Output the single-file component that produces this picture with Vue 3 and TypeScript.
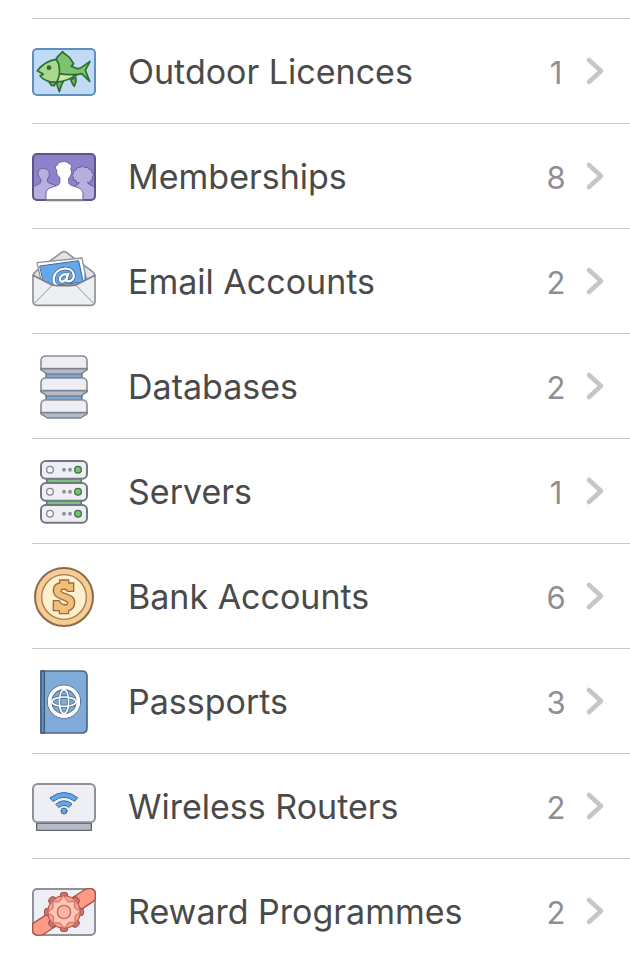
<script setup lang="ts">
type IconName = 'fish' | 'people' | 'mail' | 'database' | 'server' | 'coin' | 'passport' | 'router' | 'reward'

interface Category {
  name: string
  count: number
  icon: IconName
  top: number
}

// `top` is the vertical origin of each icon's 192-unit drawing area
const categories: Category[] = [
  { name: 'Outdoor Licences', count: 1, icon: 'fish', top: 12 },
  { name: 'Memberships', count: 8, icon: 'people', top: 9 },
  { name: 'Email Accounts', count: 2, icon: 'mail', top: 18 },
  { name: 'Databases', count: 2, icon: 'database', top: 15 },
  { name: 'Servers', count: 1, icon: 'server', top: 15 },
  { name: 'Bank Accounts', count: 6, icon: 'coin', top: 15 },
  { name: 'Passports', count: 3, icon: 'passport', top: 15 },
  { name: 'Wireless Routers', count: 2, icon: 'router', top: 0 },
  { name: 'Reward Programmes', count: 2, icon: 'reward', top: 0 },
]

const layers = [15, 81, 147]
const units = [15, 81, 147]
const petals = [0, 45, 90, 135, 180, 225, 270, 315]
</script>

<template>
  <main class="screen">
    <ul class="list">
      <li v-for="item in categories" :key="item.name" class="item">
        <a class="row" href="#">
          <svg class="icon" :viewBox="`24 ${item.top} 192 192`" aria-hidden="true" stroke-linejoin="round" stroke-linecap="round">
            <g v-if="item.icon === 'fish'">
              <rect x="27" y="39" width="186" height="138" rx="12" fill="#c2dbf4" stroke="#5f8fc0" stroke-width="6" />
              <g stroke="#2e6b35" stroke-width="5">
                <path d="M74 136L82 148L91 149L96 138Z" fill="#6fba63" />
                <path d="M96 136L101 152L106 167L112 148L118 136Z" fill="#6fba63" />
                <path d="M140 131L146 144L151 151L156 136L155 125Z" fill="#6fba63" />
                <path d="M94 74C98 62 108 55 116 47C122 56 134 59 139 68L149 83L142 91C151 92 154 99 164 98C174 95 184 85 198 76L184 103L197 136L173 113C162 113 154 120 142 125L104 114Z" fill="#7cc36d" />
                <path d="M104 113C122 116 142 116 158 115C140 130 122 136 98 138Z" fill="#cbeaa0" />
                <path d="M40 104C54 86 74 73 97 70C109 88 110 118 98 138C78 141 56 132 48 119L58 115Z" fill="#a9d98a" />
              </g>
              <circle cx="75" cy="95" r="7" fill="#2e6b35" />
            </g>

            <g v-else-if="item.icon === 'people'">
              <rect x="27" y="36" width="186" height="138" rx="12" fill="#8e82cc" />
              <path d="M28 134C36 128 47 128 51 121L50 111C39 101 39 81 55 79C74 77 82 97 71 111L70 119C75 126 88 126 96 130L84 174H39Q28 174 28 162Z" fill="#b6b0df" stroke="#6a6099" stroke-width="3" />
              <path d="M211 134C202 129 194 130 190 120L198 123L200 115L208 112L204 105L210 98L204 93L203 84L195 82L190 75L183 77L175 72L168 77L160 76L157 84L148 86L149 94L144 100L149 106L147 114L156 115L158 123L166 122C162 130 155 131 146 134L158 174H201Q212 174 212 162Z" fill="#b6b0df" stroke="#6a6099" stroke-width="3" />
              <path d="M66 175V153C67 137 85 137 104 128C109 124 108 112 107 106C98 99 96 92 99 85C92 80 94 70 101 68C104 58 112 62 117 58C124 59 130 59 134 65C144 67 144 75 140 80C145 92 142 101 135 107C133 118 132 126 142 130C160 137 175 138 177 154V175Z" fill="#fff" stroke="#6a6099" stroke-width="3" />
              <rect x="27" y="36" width="186" height="138" rx="12" fill="none" stroke="#5d5587" stroke-width="6" />
              <path d="M66 174H177" stroke="#85828e" stroke-width="6" stroke-linecap="butt" />
            </g>

            <g v-else-if="item.icon === 'mail'">
              <path d="M28 94Q28 87 37 81L112 26Q120 20 128 26L203 81Q212 87 212 94L190 124H50Z" fill="#e2e4e9" stroke="#94969b" stroke-width="5" />
              <path d="M39 56L174 42L189 117L56 132Z" fill="#fff" stroke="#929499" stroke-width="4" />
              <path d="M48 66L164 50L178 114L62 128Z" fill="#64a8ec" stroke="#45678f" stroke-width="3" />
              <path d="M182 84L188 106L181 113Z" fill="#4385cc" />
              <path d="M107 128C77 122 86 77 121 74C155 70 158 112 133 112C125 112 127 104 133 89M130 95C125 85 107 94 108 107C110 118 124 112 129 100" fill="none" stroke="#3e6287" stroke-width="11" />
              <path d="M107 128C77 122 86 77 121 74C155 70 158 112 133 112C125 112 127 104 133 89M130 95C125 85 107 94 108 107C110 118 124 112 129 100" fill="none" stroke="#fff" stroke-width="7" />
              <path d="M27 94L84 123Q93 125 105 125H135Q147 125 156 123L213 94V172Q213 184 201 184H39Q27 184 27 172Z" fill="#eeeff3" stroke="#8f9196" stroke-width="5" />
              <path d="M30 179L84 124M210 179L156 124" stroke="#8f9196" stroke-width="3" />
              <path d="M27 94L84 123Q93 125 105 125H135Q147 125 156 123L213 94" fill="none" stroke="#727986" stroke-width="3" />
            </g>

            <g v-else-if="item.icon === 'database'">
              <path d="M66 66H174V84H66ZM66 132H174V150H66Z" fill="#79a7d8" stroke="#516e92" stroke-width="4" />
              <g v-for="y in layers" :key="y">
                <path :d="`M50 ${y + 40}V${y + 44}L70 ${y + 57}H170L190 ${y + 44}V${y + 40}Z`" fill="#b4bbc9" stroke="#7b808b" stroke-width="4" />
                <path :d="`M51 ${y + 41}V${y + 18}Q51 ${y + 3} 66 ${y + 3}H174Q189 ${y + 3} 189 ${y + 18}V${y + 41}Z`" fill="#eeeff4" stroke="#8e9096" stroke-width="5" />
                <path :d="`M51 ${y + 41}H189`" stroke="#7b808b" stroke-width="3" />
              </g>
            </g>

            <g v-else-if="item.icon === 'server'">
              <path d="M68 66H172V88H68ZM68 132H172V152H68Z" fill="#7bc47d" stroke="#477750" stroke-width="4" />
              <g v-for="y in units" :key="y">
                <rect x="51" :y="y + 3" width="138" height="53" rx="14" fill="#eeeff4" stroke="#737783" stroke-width="6" />
                <circle cx="78" :cy="y + 29" r="10" fill="#fff" stroke="#85878d" stroke-width="4" />
                <circle cx="120" :cy="y + 29" r="6" fill="#929499" />
                <circle cx="138" :cy="y + 29" r="6" fill="#929499" />
                <circle cx="162" :cy="y + 29" r="10" fill="#78c273" stroke="#427348" stroke-width="4" />
              </g>
            </g>

            <g v-else-if="item.icon === 'coin'">
              <circle cx="120" cy="111" r="87" fill="#f7cd93" stroke="#8c6a4e" stroke-width="6" />
              <circle cx="120" cy="111" r="67" fill="#fff0cc" stroke="#a37b57" stroke-width="4" />
              <path d="M107 60H134V69H149V94H130C130 87 111 85 111 92C111 103 152 99 152 127C152 143 144 150 134 152V161H106V152H88V122H106C109 135 131 138 131 129C131 117 88 121 88 91C88 77 97 71 107 69Z" fill="#f3bf77" stroke="#956b45" stroke-width="4" />
            </g>

            <g v-else-if="item.icon === 'passport'">
              <path d="M51 18H174Q189 18 189 33V189Q189 204 174 204H51Z" fill="#80abd8" stroke="#4d6784" stroke-width="5" />
              <path d="M51 18H61V204H51Z" fill="#6692c3" stroke="#405a75" stroke-width="4" />
              <circle cx="120" cy="110" r="50" fill="#fff" stroke="#557798" stroke-width="3" />
              <circle cx="120" cy="110" r="37" fill="#7fabd8" stroke="#4d6b8c" stroke-width="4" />
              <g fill="none" stroke="#4d6b8c" stroke-width="10">
                <ellipse cx="120" cy="110" rx="14" ry="36" />
                <ellipse cx="120" cy="110" rx="36" ry="14" />
              </g>
              <g fill="none" stroke="#fff" stroke-width="5">
                <ellipse cx="120" cy="110" rx="14" ry="36" />
                <ellipse cx="120" cy="110" rx="36" ry="14" />
              </g>
              <circle cx="120" cy="110" r="43" fill="none" stroke="#fff" stroke-width="10" />
            </g>

            <g v-else-if="item.icon === 'router'">
              <rect x="38" y="145" width="164" height="21" fill="#b4bac8" stroke="#626770" stroke-width="4" />
              <rect x="27" y="27" width="186" height="115" rx="14" fill="#eeeff4" stroke="#8f9196" stroke-width="6" />
              <g fill="#61a9ef" stroke="#3d6794" stroke-width="3">
                <path d="M79 68Q120 37 161 68L152 79Q120 54 88 79Z" />
                <path d="M96 87Q120 67 144 87L135 97Q120 85 105 97Z" />
                <circle cx="120" cy="108" r="9" />
              </g>
            </g>

            <g v-else>
              <rect x="27" y="27" width="186" height="138" rx="12" fill="#eeeff4" stroke="#8f9196" stroke-width="6" />
              <path d="M27 130L181 30Q188 26 197 26Q214 26 214 42V54Q214 60 207 65L60 162Q54 166 44 166Q26 166 26 151V136Q26 132 27 130Z" fill="#ff9a85" stroke="#a45348" stroke-width="4" />
              <g fill="#d37670" stroke="#964f49" stroke-width="3">
                <path v-for="angle in petals" :key="angle" :transform="`rotate(${angle} 120 96)`" d="M104 61L111 39Q120 35 129 39L136 61Z" />
              </g>
              <circle cx="120" cy="96" r="49" fill="#ff9a88" stroke="#a45348" stroke-width="3" />
              <path d="M120 46Q128 68 137 66L152 64Q149 79 153 84L170 96Q151 105 153 112L153 129Q138 124 132 129L120 146Q110 126 103 128L87 129Q91 112 87 108L70 96Q91 87 87 80L87 64Q104 69 108 63Z" fill="#ffc5b5" stroke="#c56d61" stroke-width="3" />
              <circle cx="120" cy="96" r="20" fill="#ffb4a5" stroke="#c4665d" stroke-width="4" />
            </g>
          </svg>
          <span class="name">{{ item.name }}</span>
          <span class="count">{{ item.count }}</span>
          <svg class="chevron" viewBox="0 1 24 32" aria-hidden="true">
            <path d="M5 5L17 16L5 27" fill="none" stroke="#c6c6ca" stroke-width="4.5" stroke-linecap="round" stroke-linejoin="round" />
          </svg>
        </a>
      </li>
    </ul>
  </main>
</template>

<style>
body {
  margin: 0;
  background: #fff;
}
</style>

<style scoped>
.screen {
  box-sizing: border-box;
  height: 100vh;
  overflow: hidden;
  padding: 18px 0 0 32px;
  background: #fff;
  font-family: Inter, "Liberation Sans", sans-serif;
}

.list {
  margin: 0;
  padding: 0;
  border-top: 1px solid #c9c9cb;
  list-style: none;
}

.item {
  border-bottom: 1px solid #c9c9cb;
}

.row {
  display: flex;
  align-items: center;
  box-sizing: border-box;
  height: 104px;
  padding: 2px 22px 0 0;
  color: #4a4a4a;
  text-decoration: none;
}

.icon {
  flex: none;
  width: 64px;
  height: 64px;
  margin-right: 32px;
}

.name {
  flex: 1;
  font-size: 34px;
  line-height: 40px;
  white-space: nowrap;
}

.count {
  min-width: 20px;
  margin-right: 18px;
  padding-top: 2px;
  color: #8e8e93;
  font-size: 31px;
  line-height: 40px;
  text-align: center;
}

.chevron {
  flex: none;
  width: 24px;
  height: 32px;
}
</style>
